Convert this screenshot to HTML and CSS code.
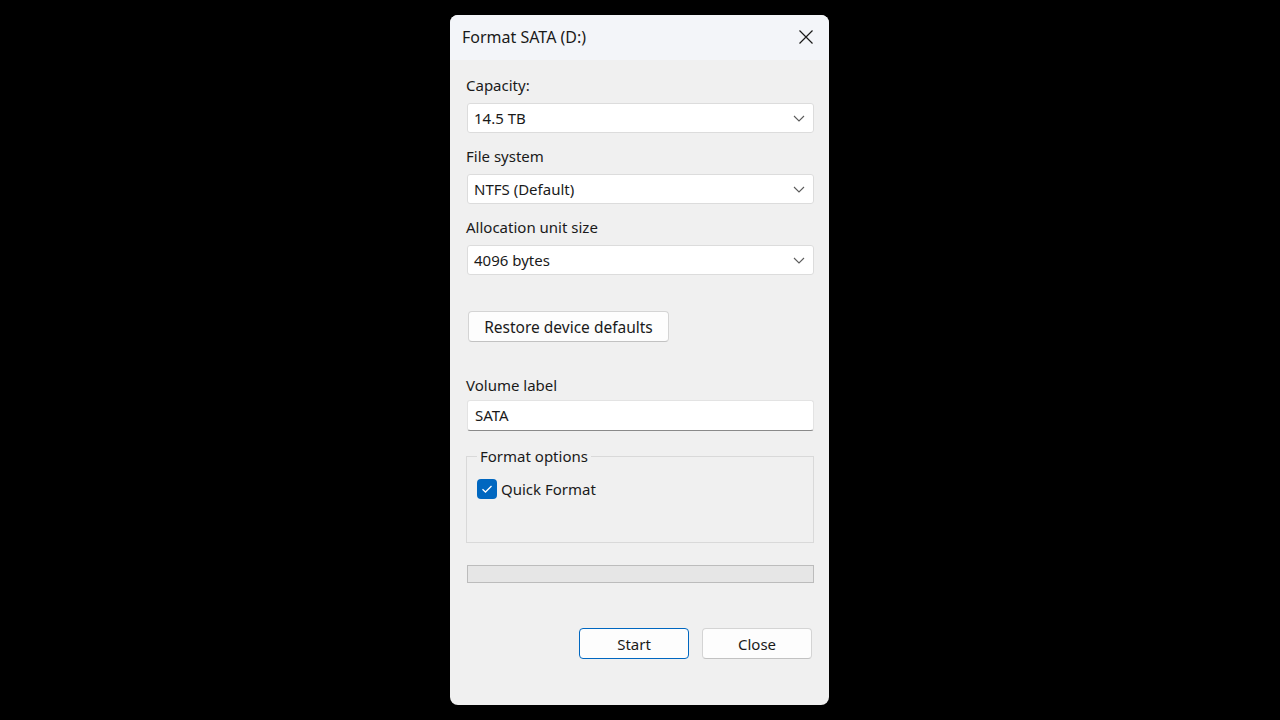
FILE: index.html
```html
<!DOCTYPE html>
<html lang="en">
<head>
    <meta charset="UTF-8">
    <meta name="viewport" content="width=device-width, initial-scale=1.0">
    <title>Format SATA (D:)</title>
    <link rel="stylesheet" href="styles.css">
</head>
<body>
    <div class="dialog">
        <div class="titlebar">
            <span class="title">Format SATA (D:)</span>
            <button class="close-x" aria-label="Close">
                <svg width="16" height="16" viewBox="0 0 16 16">
                    <path d="M1.5 1.5 L14.5 14.5 M14.5 1.5 L1.5 14.5" stroke="#1a1a1a" stroke-width="1.2" fill="none"/>
                </svg>
            </button>
        </div>

        <div class="content">
            <label class="field-label">Capacity:</label>
            <div class="combo">
                <span>14.5 TB</span>
                <svg class="chev" width="12" height="7" viewBox="0 0 12 7"><path d="M1 1 L6 6 L11 1" stroke="#5c5c5c" stroke-width="1.1" fill="none"/></svg>
            </div>

            <label class="field-label">File system</label>
            <div class="combo">
                <span>NTFS (Default)</span>
                <svg class="chev" width="12" height="7" viewBox="0 0 12 7"><path d="M1 1 L6 6 L11 1" stroke="#5c5c5c" stroke-width="1.1" fill="none"/></svg>
            </div>

            <label class="field-label">Allocation unit size</label>
            <div class="combo">
                <span>4096 bytes</span>
                <svg class="chev" width="12" height="7" viewBox="0 0 12 7"><path d="M1 1 L6 6 L11 1" stroke="#5c5c5c" stroke-width="1.1" fill="none"/></svg>
            </div>

            <button class="btn restore">Restore device defaults</button>

            <label class="field-label volume">Volume label</label>
            <div class="textbox">SATA</div>

            <fieldset class="options">
                <legend>Format options</legend>
                <div class="check-row">
                    <span class="checkbox">
                        <svg width="12" height="10" viewBox="0 0 12 10"><path d="M1.5 5.2 L4.5 8 L10.5 2" stroke="#ffffff" stroke-width="1.3" fill="none"/></svg>
                    </span>
                    <span>Quick Format</span>
                </div>
            </fieldset>

            <div class="progress"></div>

            <div class="actions">
                <button class="btn action primary">Start</button>
                <button class="btn action">Close</button>
            </div>
        </div>
    </div>
</body>
</html>
```

FILE: styles.css
```css
body {
    margin: 0;
    background-color: #000000;
    font-family: 'Noto Sans', 'Open Sans', sans-serif;
    font-size: 15px;
    color: #1a1a1a;
}
.dialog {
    width: 379px;
    height: 690px;
    margin: 15px 0 0 450px;
    background-color: #f0f0f0;
    border-radius: 8px;
    overflow: hidden;
    display: flex;
    flex-direction: column;
}
.titlebar {
    height: 43px;
    background-color: #f3f5f9;
    display: flex;
    align-items: center;
    justify-content: space-between;
    padding: 0 15px 2px 12px;
}
.title {
    font-size: 16px;
    color: #1a1a1a;
}
.close-x {
    background: none;
    border: none;
    padding: 0;
    width: 16px;
    height: 16px;
    display: flex;
}
.content {
    padding: 15px 15px 0 16px;
    display: flex;
    flex-direction: column;
}
.field-label {
    display: block;
    line-height: 20px;
    height: 20px;
    margin-bottom: 8px;
}
.combo {
    height: 28px;
    margin-left: 1px;
    background-color: #ffffff;
    border: 1px solid #dcdcdc;
    border-radius: 3px;
    display: flex;
    align-items: center;
    justify-content: space-between;
    padding: 0 8px 0 6px;
    margin-bottom: 13px;
}
.btn {
    font-family: inherit;
    font-size: 15px;
    color: #1a1a1a;
    background-color: #fdfdfd;
    border: 1px solid #d4d4d4;
    border-bottom-color: #c2c2c2;
    border-radius: 4px;
    padding: 0;
}
.restore {
    align-self: flex-start;
    width: 201px;
    height: 31px;
    margin: 23px 0 0 2px;
    font-size: 15.5px;
}
.volume {
    margin-top: 33px;
    margin-bottom: 5px;
}
.textbox {
    height: 29px;
    margin-left: 1px;
    width: 338px;
    background-color: #ffffff;
    border: 1px solid #e3e3e3;
    border-bottom-color: #8a8a8a;
    border-radius: 3px;
    padding: 0 0 0 7px;
    line-height: 29px;
}
.options {
    margin: 15px 0 0 0;
    height: 95px;
    border: 1px solid #d9d9d9;
    padding: 0 10px;
}
.options legend {
    padding: 0 3px;
    line-height: 20px;
}
.check-row {
    display: flex;
    align-items: center;
    gap: 4px;
    margin-top: 13px;
}
.checkbox {
    width: 20px;
    height: 20px;
    border-radius: 4px;
    background-color: #0067c0;
    display: flex;
    align-items: center;
    justify-content: center;
}
.progress {
    height: 16px;
    margin: 22px 0 0 1px;
    background-color: #e6e6e6;
    border: 1px solid #bcbcbc;
}
.actions {
    display: flex;
    justify-content: flex-end;
    gap: 13px;
    margin-top: 45px;
    padding-right: 2px;
}
.action {
    width: 110px;
    height: 31px;
}
.primary {
    border: 1px solid #0067c0;
}
```
